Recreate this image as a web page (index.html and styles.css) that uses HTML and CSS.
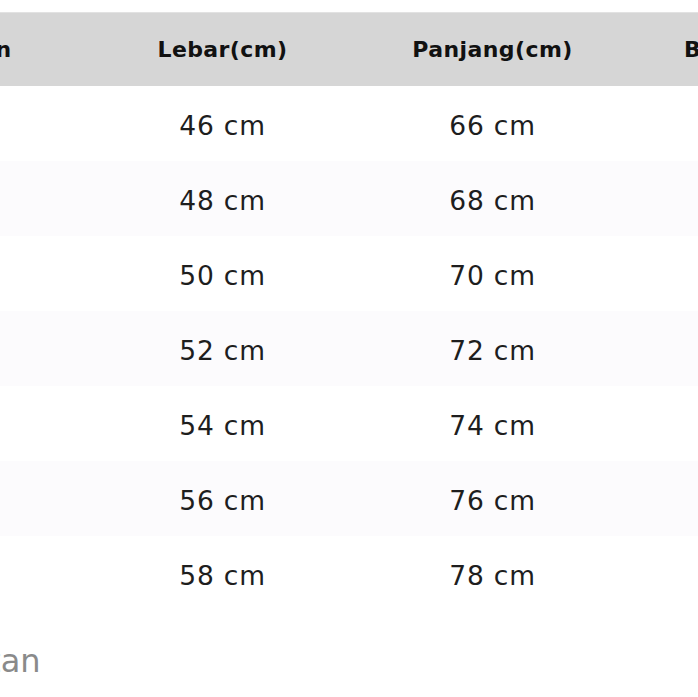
FILE: index.html
```html
<!DOCTYPE html>
<html>
<head>
<meta charset="utf-8">
<link rel="stylesheet" href="styles.css">
</head>
<body>
<div class="page">
  <div class="table">
    <div class="row head">
      <div class="cell">Ukuran</div>
      <div class="cell">Lebar(cm)</div>
      <div class="cell">Panjang(cm)</div>
      <div class="cell">Bahu(cm)</div>
    </div>
    <div class="row"><div class="cell">S</div><div class="cell">46 cm</div><div class="cell">66 cm</div><div class="cell"></div></div>
    <div class="row alt"><div class="cell">M</div><div class="cell">48 cm</div><div class="cell">68 cm</div><div class="cell"></div></div>
    <div class="row"><div class="cell">L</div><div class="cell">50 cm</div><div class="cell">70 cm</div><div class="cell"></div></div>
    <div class="row alt"><div class="cell">XL</div><div class="cell">52 cm</div><div class="cell">72 cm</div><div class="cell"></div></div>
    <div class="row"><div class="cell">2XL</div><div class="cell">54 cm</div><div class="cell">74 cm</div><div class="cell"></div></div>
    <div class="row alt"><div class="cell">3XL</div><div class="cell">56 cm</div><div class="cell">76 cm</div><div class="cell"></div></div>
    <div class="row"><div class="cell">4XL</div><div class="cell">58 cm</div><div class="cell">78 cm</div><div class="cell"></div></div>
  </div>
  <div class="note">Catatan</div>
</div>
</body>
</html>
```

FILE: styles.css
```css
html, body {
  margin: 0;
  padding: 0;
  background: #ffffff;
  overflow: hidden;
  width: 698px;
  height: 697px;
}

.page {
  padding-top: 12px;
  font-family: "DejaVu Sans", Verdana, sans-serif;
}

.table {
  margin-left: -156.5px;
  width: 1000px;
}

.row {
  display: grid;
  grid-template-columns: 244px 270px 270px 235px;
  height: 75px;
  align-items: center;
  background: #ffffff;
}

.row.alt {
  background: #fcfbfd;
}

.row.head {
  height: 74px;
  background: #d6d6d6;
  border-top: 1px solid #e2e2e2;
  box-sizing: border-box;
}

.cell {
  text-align: center;
  white-space: nowrap;
  font-size: 26.5px;
  letter-spacing: 0.8px;
  color: #1e1e1e;
  padding-top: 3px;
}

.head .cell {
  font-size: 22px;
  font-weight: bold;
  letter-spacing: 0.4px;
  color: #111111;
  padding-top: 0;
}

.note {
  margin-top: 34px;
  margin-left: -86px;
  font-size: 32px;
  color: #8a8a8a;
  line-height: 1;
}
```
